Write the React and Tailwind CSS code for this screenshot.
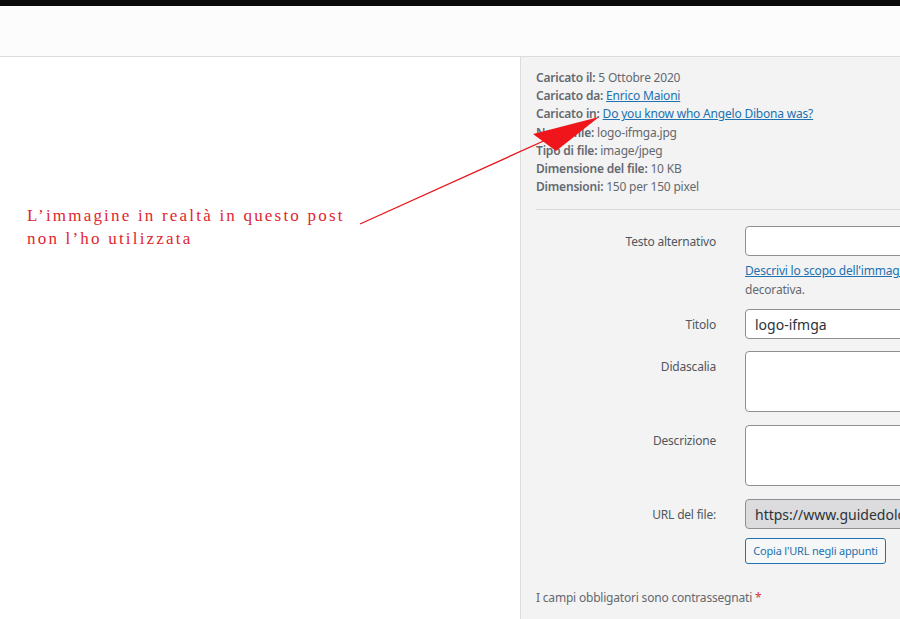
import React from "react";

const meta = [
  ["Caricato il:", "5 Ottobre 2020", false],
  ["Caricato da:", "Enrico Maioni", true],
  ["Caricato in:", "Do you know who Angelo Dibona was?", true],
  ["Nome file:", "logo-ifmga.jpg", false],
  ["Tipo di file:", "image/jpeg", false],
  ["Dimensione del file:", "10 KB", false],
  ["Dimensioni:", "150 per 150 pixel", false],
];

const Label = ({ children }) => (
  <div className="w-[180px] shrink-0 text-right pt-[7px] leading-[18px] text-[#50575e]">
    {children}
  </div>
);

const App = () => {
  return (
    <div className="relative w-[900px] h-[619px] overflow-hidden flex flex-col bg-white">
      <div className="h-[6px] bg-[#0b0b0b]" />
      <div className="h-[51px] bg-[#fcfcfc] border-b border-[#dcdcde]" />
      <div className="flex flex-1">
        <div className="w-[520px] shrink-0 bg-white pt-[147px] pl-[27px]">
          <p
            className="text-[17px] leading-[23px] tracking-[2.2px] text-[#e0262f]"
            style={{ fontFamily: '"Liberation Serif", serif' }}
          >
            L’immagine in realtà in questo post
            <br />
            non l’ho utilizzata
          </p>
        </div>
        <div
          className="flex-1 bg-[#f3f3f3] border-l border-[#dcdcde] pl-[15px] pt-[12px] text-[12px] tracking-[-0.2px] text-[#646970] overflow-hidden"
          style={{ fontFamily: '"Noto Sans", "Open Sans", sans-serif' }}
        >
          <div className="leading-[18.2px]">
            {meta.map(([k, v, link]) => (
              <div key={k} className="whitespace-nowrap">
                <span className="font-semibold">{k}</span>{" "}
                {link ? (
                  <a className="text-[#2271b1] underline">{v}</a>
                ) : (
                  <span>{v}</span>
                )}
              </div>
            ))}
          </div>
          <div className="mt-[13px] h-px bg-[#dcdcde]" />

          <div className="mt-[16px] flex gap-[29px]">
            <Label>Testo alternativo</Label>
            <div className="w-[300px] shrink-0">
              <div className="h-[30px] rounded-[4px] border border-[#8c8f94] bg-white" />
              <div className="mt-[6px] leading-[18.5px] whitespace-nowrap">
                <a className="text-[#2271b1] underline">
                  Descrivi lo scopo dell'immagine. Lascia vuoto se l'immagine è puramente
                </a>
                <br />
                decorativa.
              </div>
            </div>
          </div>

          <div className="mt-[10px] flex gap-[29px]">
            <Label>Titolo</Label>
            <div className="w-[300px] shrink-0 h-[30px] rounded-[4px] border border-[#8c8f94] bg-white px-[9px] flex items-center text-[14px] tracking-normal text-[#2c3338]">
              logo-ifmga
            </div>
          </div>

          <div className="mt-[12px] flex gap-[29px]">
            <Label>Didascalia</Label>
            <div className="w-[300px] shrink-0 h-[61px] rounded-[4px] border border-[#8c8f94] bg-white" />
          </div>

          <div className="mt-[13px] flex gap-[29px]">
            <Label>Descrizione</Label>
            <div className="w-[300px] shrink-0 h-[61px] rounded-[4px] border border-[#8c8f94] bg-white" />
          </div>

          <div className="mt-[13px] flex gap-[29px]">
            <Label>URL del file:</Label>
            <div>
              <div className="w-[300px] h-[30px] rounded-[4px] border border-[#8c8f94] bg-[#dcdcde] px-[9px] flex items-center text-[14px] tracking-normal text-[#2c3338] whitespace-nowrap overflow-hidden">
                https://www.guidedolomiti.com/wp-content/uploads/logo-ifmga.jpg
              </div>
              <button className="mt-[9px] h-[26px] w-[141px] rounded-[3px] border border-[#2271b1] bg-[#f6f7f7] text-[11px] tracking-[-0.2px] text-[#2271b1]">
                Copia l'URL negli appunti
              </button>
            </div>
          </div>

          <div className="mt-[25px] leading-[18px]">
            I campi obbligatori sono contrassegnati{" "}
            <span className="text-[#d63638]">*</span>
          </div>
        </div>
      </div>

      <svg
        className="absolute inset-0 pointer-events-none"
        width="900"
        height="619"
        viewBox="0 0 900 619"
      >
        <line x1="360" y1="224" x2="548" y2="139" stroke="#e8141b" strokeWidth="1.3" />
        <polygon points="599,117 533,134 556,151" fill="#f0141b" />
      </svg>
    </div>
  );
};

export default App;
